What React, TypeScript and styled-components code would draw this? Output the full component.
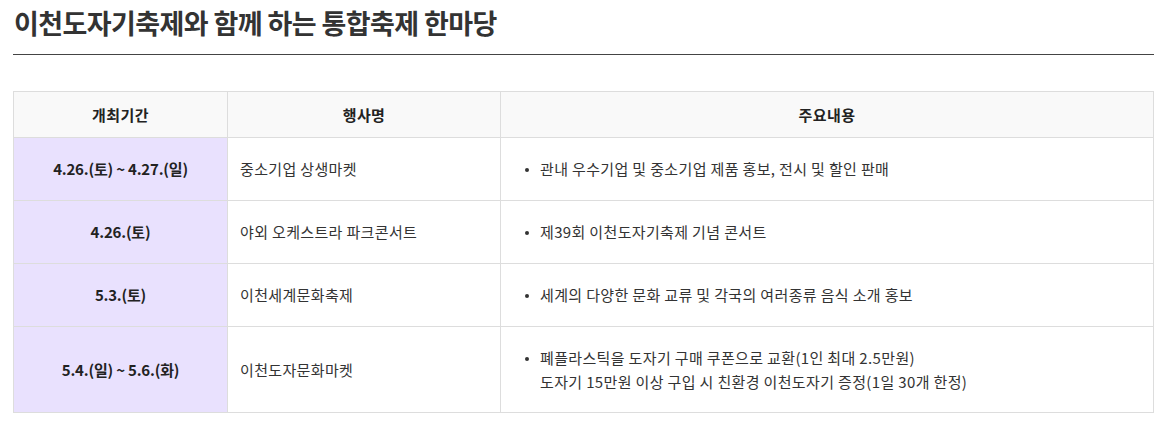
import React from "react";
import styled, { createGlobalStyle } from "styled-components";

const GlobalStyle = createGlobalStyle`
  html, body {
    margin: 0;
    padding: 0;
    background: #fff;
  }
  body {
    font-family: "Noto Sans CJK KR", "Noto Sans", sans-serif;
    color: #333;
  }
`;

const Page = styled.div`
  width: 1141px;
  padding: 0 0 0 13px;
`;

const Title = styled.h2`
  margin: 0;
  padding: 5px 0 0 1px;
  height: 55px;
  box-sizing: border-box;
  border-bottom: 1px solid #444;
  font-size: 27px;
  font-weight: 700;
  line-height: 36px;
  color: #333;
  letter-spacing: -0.6px;
`;

const Table = styled.table`
  margin-top: 36px;
  width: 100%;
  border-collapse: collapse;
  table-layout: fixed;
  font-size: 15px;
`;

const HeadCell = styled.th`
  height: 45px;
  padding: 0;
  border: 1px solid #ddd;
  background: #f9f9f9;
  font-weight: 700;
  color: #222;
  text-align: center;
  vertical-align: middle;
  letter-spacing: 0.4px;
`;

const Cell = styled.td<{ $date?: boolean; $tall?: boolean }>`
  height: ${(p) => (p.$tall ? "85px" : "62px")};
  padding: 0 12px;
  border: 1px solid #ddd;
  background: ${(p) => (p.$date ? "#e9e1fe" : "#fff")};
  font-weight: ${(p) => (p.$date ? 700 : 400)};
  text-align: ${(p) => (p.$date ? "center" : "left")};
  letter-spacing: ${(p) => (p.$date ? "-0.2px" : "0.35px")};
  vertical-align: middle;
  color: ${(p) => (p.$date ? "#222" : "#333")};
  line-height: 24px;
`;

const List = styled.ul`
  margin: 0;
  padding: 0 0 0 12px;
  list-style: none;
`;

const Item = styled.li`
  position: relative;
  padding-left: 15px;
  &::before {
    content: "";
    position: absolute;
    left: 0;
    top: 11px;
    width: 4px;
    height: 4px;
    border-radius: 50%;
    background: #333;
  }
`;

const rows = [
  {
    date: "4.26.(토) ~ 4.27.(일)",
    name: "중소기업 상생마켓",
    lines: ["관내 우수기업 및 중소기업 제품 홍보, 전시 및 할인 판매"],
  },
  {
    date: "4.26.(토)",
    name: "야외 오케스트라 파크콘서트",
    lines: ["제39회 이천도자기축제 기념 콘서트"],
  },
  {
    date: "5.3.(토)",
    name: "이천세계문화축제",
    lines: ["세계의 다양한 문화 교류 및 각국의 여러종류 음식 소개 홍보"],
  },
  {
    date: "5.4.(일) ~ 5.6.(화)",
    name: "이천도자문화마켓",
    lines: [
      "폐플라스틱을 도자기 구매 쿠폰으로 교환(1인 최대 2.5만원)",
      "도자기 15만원 이상 구입 시 친환경 이천도자기 증정(1일 30개 한정)",
    ],
  },
];

export default function App() {
  return (
    <>
      <GlobalStyle />
      <Page>
        <Title>이천도자기축제와 함께 하는 통합축제 한마당</Title>
        <Table>
          <colgroup>
            <col style={{ width: 214 }} />
            <col style={{ width: 273 }} />
            <col />
          </colgroup>
          <thead>
            <tr>
              <HeadCell>개최기간</HeadCell>
              <HeadCell>행사명</HeadCell>
              <HeadCell>주요내용</HeadCell>
            </tr>
          </thead>
          <tbody>
            {rows.map((r) => {
              const tall = r.lines.length > 1;
              return (
                <tr key={r.date + r.name}>
                  <Cell $date $tall={tall}>
                    {r.date}
                  </Cell>
                  <Cell $tall={tall}>{r.name}</Cell>
                  <Cell $tall={tall}>
                    <List>
                      <Item>
                        {r.lines.map((l, i) => (
                          <React.Fragment key={i}>
                            {i > 0 && <br />}
                            {l}
                          </React.Fragment>
                        ))}
                      </Item>
                    </List>
                  </Cell>
                </tr>
              );
            })}
          </tbody>
        </Table>
      </Page>
    </>
  );
}
